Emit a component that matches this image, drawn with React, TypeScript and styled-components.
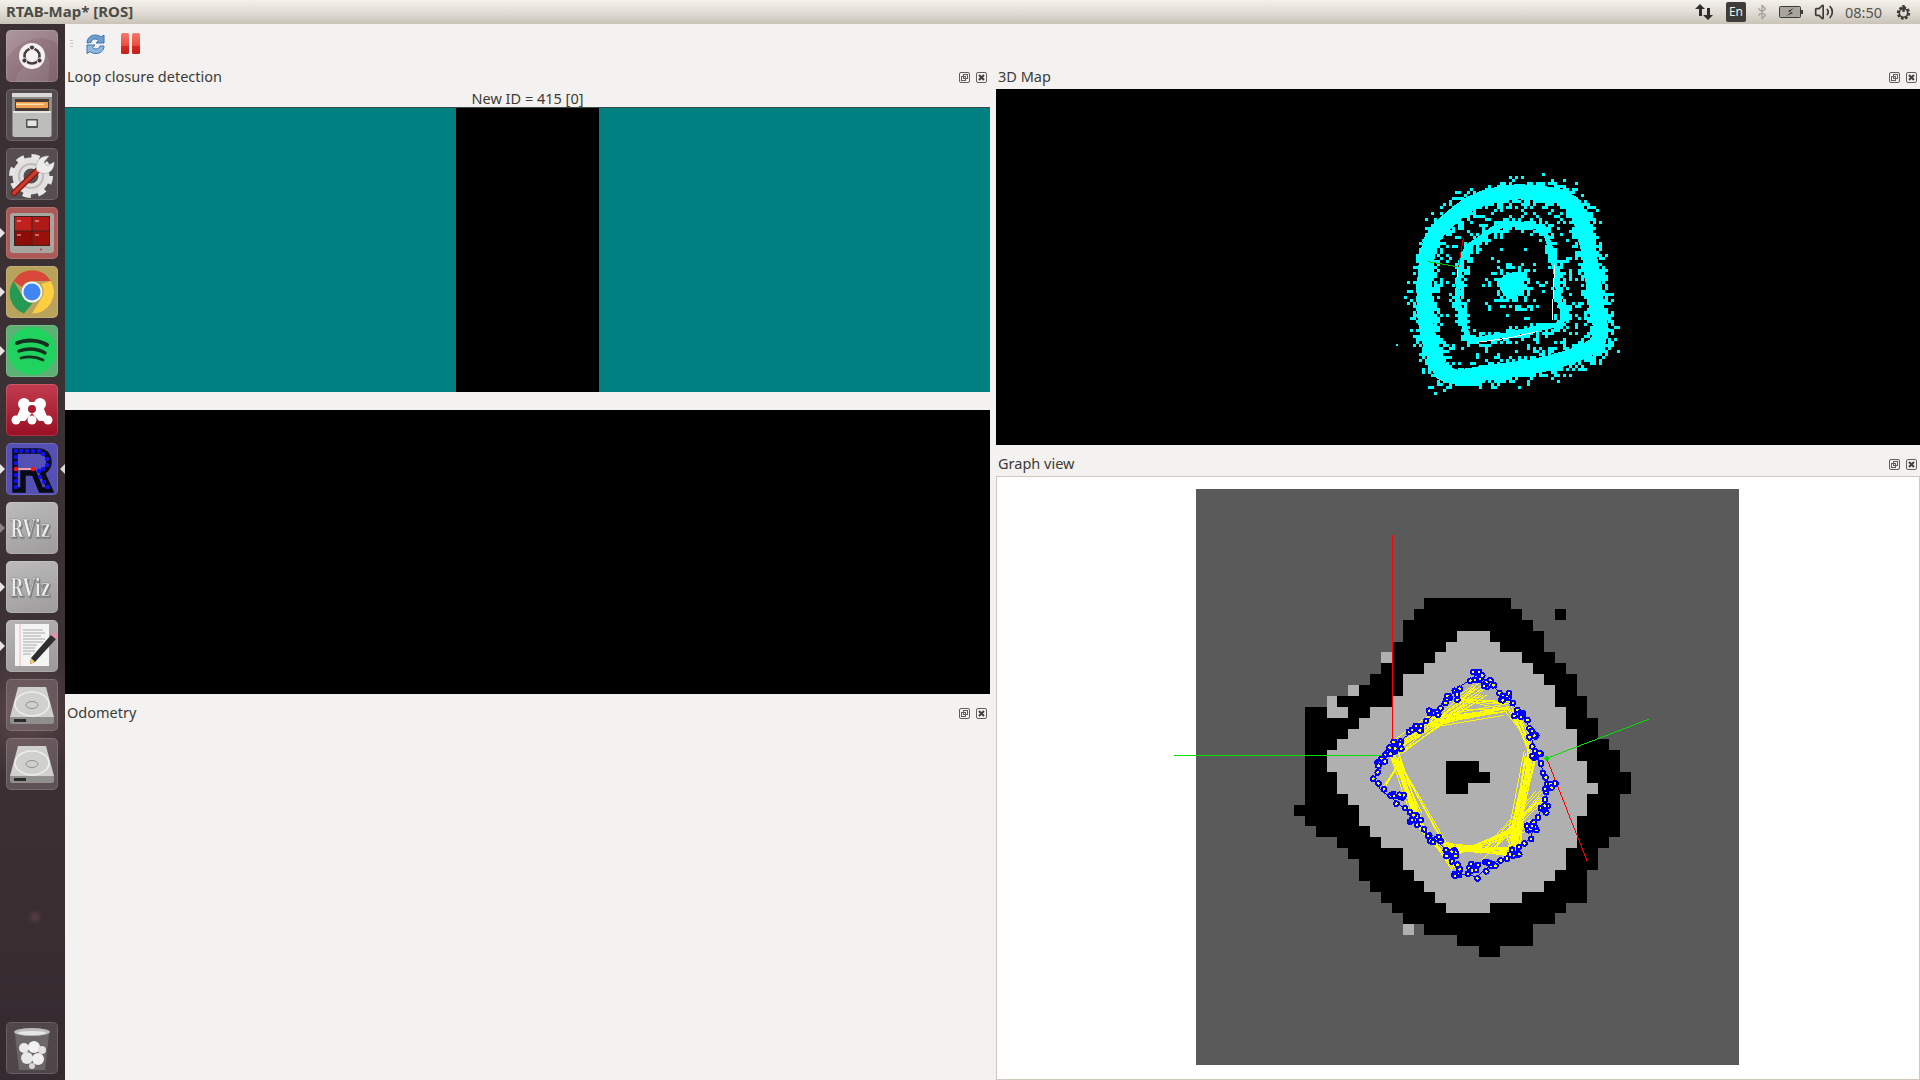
import React, { useMemo } from "react";
import styled, { createGlobalStyle } from "styled-components";
import { Bluetooth, Volume2 } from "lucide-react";

const GlobalStyle = createGlobalStyle`
  html, body {
    margin: 0;
    padding: 0;
    height: 100%;
    overflow: hidden;
    background: #f4f2f0;
  }
  #root { height: 100%; }
`;

const FONT = `"Noto Sans", "Open Sans", sans-serif`;

const Screen = styled.div`
  display: flex;
  flex-direction: column;
  width: 1920px;
  height: 1080px;
  font-family: ${FONT};
  color: #3c3b37;
  background: #f4f2f0;
`;

const TopBar = styled.div`
  display: flex;
  align-items: center;
  justify-content: space-between;
  flex: 0 0 24px;
  padding: 0 8px 0 6px;
  box-sizing: border-box;
  background: linear-gradient(180deg, #f3f1ea 0%, #e4e0d8 45%, #c9c3b8 100%);
`;

const WindowTitle = styled.div`
  font-size: 15px;
  line-height: 22px;
  padding-bottom: 2px;
  font-weight: 700;
  color: #4c4c47;
`;

const Tray = styled.div`
  display: flex;
  align-items: center;
  height: 24px;
`;

const TrayItem = styled.div<{ $ml: number; $color?: string }>`
  display: flex;
  align-items: center;
  margin-left: ${(p) => p.$ml}px;
  color: ${(p) => p.$color ?? "#3c3b37"};
`;

const LangBadge = styled.div`
  width: 20px;
  height: 20px;
  border-radius: 2px;
  background: #3d3c3a;
  color: #f2f0ea;
  font-size: 12px;
  line-height: 20px;
  text-align: center;
`;

const Clock = styled.div`
  font-size: 14.5px;
  color: #55544f;
`;

const Body = styled.div`
  display: flex;
  flex: 1;
  min-height: 0;
`;

const Launcher = styled.div`
  position: relative;
  flex: 0 0 65px;
  display: flex;
  flex-direction: column;
  background:
    radial-gradient(ellipse 60px 70px at 25px 690px, rgba(140, 105, 110, 0.4), transparent 100%),
    radial-gradient(circle 8px at 35px 893px, rgba(150, 90, 100, 0.35), transparent 100%),
    linear-gradient(180deg, #3a3034 0%, #3c3135 55%, #3b2f33 75%, #352a2f 100%);
`;

const TileSlot = styled.div<{ $mt?: number }>`
  position: relative;
  height: 52px;
  margin: ${(p) => p.$mt ?? 7}px 0 0 6px;
  width: 52px;
`;

const Tile = styled.div<{ $bg: string }>`
  width: 52px;
  height: 52px;
  border-radius: 5px;
  overflow: hidden;
  background: ${(p) => p.$bg};
  box-shadow: inset 0 0 0 1px rgba(255, 255, 255, 0.14);

  svg {
    display: block;
  }
`;

const Pip = styled.div<{ $hollow?: boolean }>`
  position: absolute;
  left: -6px;
  top: 21px;
  width: 0;
  height: 0;
  border-top: 5px solid transparent;
  border-bottom: 5px solid transparent;
  border-left: 5px solid ${(p) => (p.$hollow ? "#8c8084" : "#e8e4e4")};
`;

const PipRight = styled.div`
  position: absolute;
  right: -7px;
  top: 21px;
  width: 0;
  height: 0;
  border-top: 5px solid transparent;
  border-bottom: 5px solid transparent;
  border-right: 5px solid #dcd8d8;
`;

const TrashSlot = styled.div`
  position: relative;
  margin: auto 0 6px 6px;
  width: 52px;
  height: 52px;
`;

const Main = styled.div`
  flex: 1;
  display: flex;
  flex-direction: column;
  min-width: 0;
`;

const Toolbar = styled.div`
  flex: 0 0 42px;
  display: flex;
  align-items: flex-start;
  padding: 8px 0 0 5px;
  box-sizing: border-box;
`;

const Grip = styled.div`
  width: 3px;
  height: 9px;
  margin: 8px 10px 0 0;
  background: repeating-linear-gradient(180deg, #c9c6c2 0 1px, transparent 1px 3px);
`;

const ToolButton = styled.div<{ $mr?: number }>`
  width: 24px;
  height: 24px;
  margin-right: ${(p) => p.$mr ?? 0}px;

  svg {
    display: block;
  }
`;

const Docks = styled.div`
  flex: 1;
  display: flex;
  min-height: 0;
`;

const LeftColumn = styled.div`
  flex: 0 0 925px;
  margin-right: 6px;
  display: flex;
  flex-direction: column;
`;

const RightColumn = styled.div`
  flex: 1;
  display: flex;
  flex-direction: column;
  min-width: 0;
`;

const DockTitle = styled.div<{ $mt?: number; $mb?: number }>`
  flex: 0 0 22px;
  display: flex;
  align-items: center;
  justify-content: space-between;
  margin: ${(p) => p.$mt ?? 0}px 0 ${(p) => p.$mb ?? 0}px;
  padding: 0 3px 0 2px;
  font-size: 14.5px;
  line-height: 20px;
  color: #3c3b37;
`;

const DockLabel = styled.span`
  margin-top: -2px;
`;

const DockButtons = styled.div`
  display: flex;
  gap: 6px;
  svg {
    display: block;
  }
`;

const ViewLabel = styled.div`
  flex: 0 0 19px;
  min-height: 0;
  text-align: center;
  font-size: 14.5px;
  line-height: 21px;
  color: #3c3b37;
`;

const LoopImage = styled.div`
  flex: 0 0 285px;
  display: flex;
  justify-content: center;
  background: #008080;
  border-top: 1px solid #3a4a4a;
  box-sizing: border-box;
`;

const LoopGap = styled.div`
  width: 143px;
  background: #000;
`;

const BlackView = styled.div<{ $h: number; $mt?: number }>`
  flex: 0 0 ${(p) => p.$h}px;
  margin-top: ${(p) => p.$mt ?? 0}px;
  background: #000;
  overflow: hidden;

  svg {
    display: block;
  }
`;

const GraphCanvas = styled.div`
  flex: 1;
  background: #fff;
  border: 1px solid #cfc8bf;
  overflow: hidden;

  svg {
    display: block;
  }
`;

function rng(seed: number) {
  let a = seed;
  return () => {
    a |= 0;
    a = (a + 0x6d2b79f5) | 0;
    let t = Math.imul(a ^ (a >>> 15), 1 | a);
    t = (t + Math.imul(t ^ (t >>> 7), 61 | t)) ^ t;
    return ((t ^ (t >>> 14)) >>> 0) / 4294967296;
  };
}

type Pt = [number, number];

function resample(poly: Pt[], step: number): Pt[] {
  const out: Pt[] = [];
  for (let i = 0; i < poly.length; i++) {
    const [x0, y0] = poly[i];
    const [x1, y1] = poly[(i + 1) % poly.length];
    const n = Math.max(1, Math.round(Math.hypot(x1 - x0, y1 - y0) / step));
    for (let k = 0; k < n; k++) out.push([x0 + ((x1 - x0) * k) / n, y0 + ((y1 - y0) * k) / n]);
  }
  return out;
}

// corner cutting, so the scanned walls come out round
function smooth(poly: Pt[]): Pt[] {
  const out: Pt[] = [];
  for (let i = 0; i < poly.length; i++) {
    const [x0, y0] = poly[i];
    const [x1, y1] = poly[(i + 1) % poly.length];
    out.push([x0 * 0.75 + x1 * 0.25, y0 * 0.75 + y1 * 0.25]);
    out.push([x0 * 0.25 + x1 * 0.75, y0 * 0.25 + y1 * 0.75]);
  }
  return out;
}

const OUTER_RING: Pt[] = smooth([
  [132, 420], [140, 320], [155, 262], [215, 200], [285, 150], [390, 124], [480, 128], [570, 145],
  [605, 210], [632, 330], [645, 450], [670, 570], [600, 612], [470, 650], [340, 665], [195, 688],
  [158, 610], [132, 500],
]);

const INNER_RING: Pt[] = [
  [240, 345], [262, 290], [300, 265], [340, 235], [395, 220], [490, 232], [510, 290], [530, 380],
  [538, 450], [555, 505], [530, 525], [470, 535], [380, 555], [270, 572], [245, 510], [232, 440],
];

function cloudPaths() {
  const r = rng(7);
  const map = (x: number, y: number): Pt => [
    Math.round((1380 + x / 3 - 996) / 3) * 3,
    Math.round((150 + y / 3 - 89) / 3) * 3,
  ];
  const gauss = () => (r() + r() + r() - 1.5) / 0.5;
  let d = "";
  const dot = (x: number, y: number) => {
    const [px, py] = map(x, y);
    d += `M${px} ${py}h3v3h-3z`;
  };
  const outer = resample(OUTER_RING, 8);
  const inner = resample(INNER_RING, 6);
  const cx = 395;
  const cy = 405;
  for (let i = 0; i < 2400; i++) {
    const p = outer[Math.floor(r() * outer.length)];
    dot(p[0] + gauss() * 19, p[1] + gauss() * 17);
  }
  for (let i = 0; i < 170; i++) {
    const p = outer[Math.floor(r() * outer.length)];
    const f = 0.64 + r() * 0.26;
    dot(cx + (p[0] - cx) * f, cy + (p[1] - cy) * f);
  }
  for (let i = 0; i < 60; i++) {
    const p = outer[Math.floor(r() * outer.length)];
    const f = 1.1 + r() * 0.12;
    dot(cx + (p[0] - cx) * f, cy + (p[1] - cy) * f);
  }
  for (let i = 0; i < 620; i++) {
    const p = inner[Math.floor(r() * inner.length)];
    dot(p[0] + gauss() * 10, p[1] + gauss() * 10);
  }
  for (let i = 0; i < 150; i++) {
    const a = r() * Math.PI * 2;
    const rad = 30 + r() * r() * 100;
    dot(cx + Math.cos(a) * rad, cy + Math.sin(a) * rad);
  }
  const toPts = (ring: Pt[]) =>
    ring.map(([x, y]) => `${1380 + x / 3 - 996},${150 + y / 3 - 89}`).join(" ");
  return { d, outer: toPts(OUTER_RING), inner: toPts(INNER_RING) };
}

function PointCloud() {
  const { d, outer, inner } = useMemo(cloudPaths, []);
  const ax = (x: number, y: number) => `${1380 + x / 3 - 996},${150 + y / 3 - 89}`;
  return (
    <svg width="924" height="356" shapeRendering="crispEdges">
      <polygon points={outer} fill="none" stroke="#00ffff" strokeWidth="15" strokeLinejoin="round" />
      <polygon points={inner} fill="none" stroke="#00ffff" strokeWidth="5" strokeLinejoin="round" />
      <path d={d} fill="#00ffff" />
      <circle cx={1380 + 395 / 3 - 996} cy={150 + 405 / 3 - 89} r="12" fill="#00ffff" />
      <rect x={1380 + 48 / 3 - 996} y={150 + 582 / 3 - 89} width="2" height="2" fill="#00ffff" />
      <polyline points={`${ax(232, 350)} ${ax(145, 335)}`} stroke="#00c000" strokeWidth="1" />
      <polyline points={`${ax(236, 350)} ${ax(250, 265)}`} stroke="#d00000" strokeWidth="1" />
      <polyline points={`${ax(290, 577)} ${ax(380, 565)} ${ax(470, 545)}`} fill="none" stroke="#fff" strokeWidth="1" />
      <polyline points={`${ax(516, 510)} ${ax(524, 345)}`} fill="none" stroke="#fff" strokeWidth="1" />
      <polyline points={`${ax(232, 385)} ${ax(234, 350)}`} fill="none" stroke="#fff" strokeWidth="1" />
    </svg>
  );
}

// black range, light range(s), hole; columns of the occupancy grid
const GRID: { b: number[][]; l?: number[][]; h?: number[] }[] = [
  { b: [[12, 20]] },
  { b: [[11, 21], [24, 25]] },
  { b: [[10, 22]] },
  { b: [[10, 23]], l: [[15, 18]] },
  { b: [[9, 23]], l: [[14, 19]] },
  { b: [[9, 24]], l: [[13, 21], [8, 9]] },
  { b: [[8, 25]], l: [[12, 22]] },
  { b: [[7, 26]], l: [[10, 23]] },
  { b: [[6, 26]], l: [[10, 24], [5, 6]] },
  { b: [[4, 27]], l: [[9, 24], [3, 4]] },
  { b: [[1, 27]], l: [[7, 25], [3, 5]] },
  { b: [[1, 28]], l: [[6, 25]] },
  { b: [[1, 28]], l: [[5, 26]] },
  { b: [[1, 29]], l: [[4, 26]] },
  { b: [[1, 30]], l: [[3, 26]] },
  { b: [[1, 30]], l: [[3, 27]], h: [14, 17] },
  { b: [[1, 31]], l: [[4, 27]], h: [14, 18] },
  { b: [[1, 31]], l: [[4, 28]], h: [14, 16] },
  { b: [[1, 30]], l: [[5, 27]] },
  { b: [[0, 30]], l: [[6, 27]] },
  { b: [[1, 30]], l: [[6, 26]] },
  { b: [[2, 30]], l: [[7, 26]] },
  { b: [[4, 29]], l: [[8, 26]] },
  { b: [[5, 28]], l: [[10, 25]] },
  { b: [[6, 28]], l: [[10, 25]] },
  { b: [[6, 27]], l: [[11, 24]] },
  { b: [[7, 27]], l: [[12, 23]] },
  { b: [[8, 27]], l: [[13, 21]] },
  { b: [[9, 25]], l: [[14, 18]] },
  { b: [[10, 24]] },
  { b: [[12, 22]], l: [[10, 11]] },
  { b: [[15, 22]] },
  { b: [[17, 19]] },
];

const LOOP: Pt[] = [
  [298, 518], [282, 570], [305, 603], [355, 640], [405, 685], [430, 720], [460, 745], [510, 790],
  [535, 850], [590, 860], [640, 820], [700, 790], [750, 745], [785, 655], [812, 590], [770, 500],
  [740, 390], [680, 322], [620, 275], [590, 255], [540, 290], [490, 335], [460, 375], [410, 415],
  [365, 450], [330, 480],
];

// node clusters where the robot went by several times
const CLUSTERS: Pt[] = [
  [300, 518], [335, 480], [350, 465], [410, 415], [460, 375], [515, 320], [590, 258], [625, 280],
  [670, 320], [720, 370], [755, 435], [768, 490], [810, 590], [790, 655], [755, 720], [705, 785],
  [630, 820], [580, 830], [535, 848], [510, 790], [460, 745], [405, 685], [355, 610],
];

function graphData() {
  const r = rng(21);
  const lines: string[] = [];
  const fan = (a: Pt, b: Pt, n: number, spread: number) => {
    const j = () => (r() - 0.5) * spread;
    for (let i = 0; i < n; i++) lines.push(`M${a[0] + j()} ${a[1] + j()}L${b[0] + j()} ${b[1] + j()}`);
  };
  // the closures run along the sides of the loop and leave the middle empty
  fan([370, 470], [600, 300], 16, 50);
  fan([450, 400], [670, 360], 14, 36);
  fan([540, 345], [690, 345], 6, 40);
  fan([690, 350], [750, 470], 10, 36);
  fan([752, 490], [700, 770], 24, 40);
  fan([790, 620], [620, 790], 10, 44);
  fan([500, 770], [700, 785], 16, 28);
  fan([520, 790], [760, 700], 8, 30);
  fan([345, 500], [410, 680], 20, 36);
  fan([365, 530], [500, 770], 4, 10);
  fan([400, 680], [530, 840], 8, 30);
  fan([310, 590], [360, 520], 3, 16);

  const loop = resample(LOOP, 26);
  const nodes = loop.map(([x, y]) => [x + (r() - 0.5) * 14, y + (r() - 0.5) * 14] as Pt);
  CLUSTERS.forEach(([x, y]) => {
    for (let i = 0; i < 6; i++) nodes.push([x + (r() - 0.5) * 34, y + (r() - 0.5) * 26]);
  });
  return { chords: lines.join(""), nodes };
}

function GraphView() {
  const { chords, nodes } = useMemo(graphData, []);
  const cx = (c: number) => 42 + c * 32.6;
  const cy = (row: number) => 24 + row * 32.64;
  return (
    <svg width="922" height="602" shapeRendering="crispEdges">
      <rect x="199" y="12" width="543" height="576" fill="#5a5a5a" />
      <g transform="translate(283 113) scale(0.3333)">
        {GRID.map((row, i) => (
          <React.Fragment key={i}>
            {row.b.map(([a, b]) => (
              <rect key={a} x={cx(a)} y={cy(i)} width={cx(b) - cx(a)} height="32.64" fill="#000" />
            ))}
            {row.l?.map(([a, b]) => (
              <rect key={a} x={cx(a)} y={cy(i)} width={cx(b) - cx(a)} height="32.64" fill="#b0b0b0" />
            ))}
            {row.h && (
              <rect x={cx(row.h[0])} y={cy(i)} width={cx(row.h[1]) - cx(row.h[0])} height="32.64" fill="#000" />
            )}
          </React.Fragment>
        ))}
        <line x1="338" y1="-165" x2="338" y2="470" stroke="#ff0000" strokeWidth="3" />
        <line x1="-318" y1="496" x2="310" y2="496" stroke="#00e000" strokeWidth="3" />
        <line x1="800" y1="505" x2="1106" y2="388" stroke="#00e000" strokeWidth="3" />
        <line x1="800" y1="505" x2="921" y2="812" stroke="#ff0000" strokeWidth="3" />
        <path d={chords} fill="none" stroke="#ffff00" strokeWidth="3" />
        <polygon
          points={LOOP.map((p) => p.join(",")).join(" ")}
          fill="none"
          stroke="#0000ff"
          strokeWidth="3"
        />
        {nodes.map(([x, y], i) => (
          <circle key={i} cx={x} cy={y} r="7" fill="#ffff00" stroke="#0000ff" strokeWidth="6" />
        ))}
        <circle cx="800" cy="505" r="7" fill="#00e000" />
      </g>
    </svg>
  );
}

function FloatIcon() {
  return (
    <svg width="11" height="11" viewBox="0 0 11 11" fill="none" stroke="#5f5f5c">
      <rect x="0.5" y="0.5" width="10" height="10" rx="1.5" />
      <rect x="4.5" y="2.5" width="4" height="4" />
      <rect x="2.5" y="4.5" width="4" height="4" />
    </svg>
  );
}

function CloseIcon() {
  return (
    <svg width="11" height="11" viewBox="0 0 11 11" fill="none" stroke="#5f5f5c">
      <rect x="0.5" y="0.5" width="10" height="10" rx="1.5" />
      <path d="M3 3l5 5M8 3l-5 5" strokeWidth="2" stroke="#3f3f3d" />
    </svg>
  );
}

function DockControls() {
  return (
    <DockButtons>
      <FloatIcon />
      <CloseIcon />
    </DockButtons>
  );
}

function RefreshIcon() {
  return (
    <svg width="24" height="24" viewBox="0 0 24 24">
      <path
        d="M4 11c0-5 4-8 8-8 3 0 5 1 6 2l3-2v8h-8l2.5-2.5c-1-1-2-1.5-3.5-1.5-2 0-3.5 1-4 3.5z"
        fill="#6f9fd0"
        stroke="#3f74ad"
      />
      <path
        d="M21 14c0 5-4 7.5-8 7.5-3 0-5-1-6-2L4 21.5V13h8l-2.5 2.5c1 1 2 1.5 3.5 1.5 2 0 3.5-1 4-3z"
        fill="#8fb8de"
        stroke="#3f74ad"
      />
    </svg>
  );
}

function PauseIcon() {
  return (
    <svg width="24" height="24" viewBox="0 0 24 24">
      <defs>
        <linearGradient id="pz" x1="0" y1="0" x2="0" y2="1">
          <stop offset="0" stopColor="#f47a6e" />
          <stop offset="0.6" stopColor="#ee4a3c" />
          <stop offset="0.62" stopColor="#d8281e" />
          <stop offset="1" stopColor="#c42018" />
        </linearGradient>
      </defs>
      <rect x="2" y="1" width="8" height="21" rx="1.5" fill="url(#pz)" />
      <rect x="13" y="1" width="8" height="21" rx="1.5" fill="url(#pz)" />
    </svg>
  );
}

function ArrowsIcon() {
  return (
    <svg width="18" height="18" viewBox="0 0 18 18" fill="#2f2e2c">
      <path d="M5 1l5 5H7v7H4V6H0z" />
      <path d="M13 17l5-5h-3V5h-3v7H8z" />
    </svg>
  );
}

function BatteryIcon() {
  return (
    <svg width="24" height="14" viewBox="0 0 24 14">
      <rect x="0.5" y="1.5" width="21" height="11" rx="1" fill="#a8a59e" stroke="#3c3b37" />
      <rect x="22" y="5" width="2" height="4" fill="#3c3b37" />
      <path d="M15 3L9 6l3 1.5L7 11l7-3-3-1.5z" fill="#2f2e2c" />
    </svg>
  );
}

function SessionIcon() {
  return (
    <svg width="17" height="17" viewBox="0 0 17 17" fill="none" stroke="#3a3936">
      <circle cx="8.5" cy="9" r="5.5" strokeWidth="2.4" strokeDasharray="2.6 1.6" />
      <circle cx="8.5" cy="9" r="4.2" strokeWidth="1.6" />
      <line x1="8.5" y1="1" x2="8.5" y2="8" strokeWidth="2.4" />
    </svg>
  );
}

function DashIcon() {
  return (
    <svg width="52" height="52" viewBox="0 0 52 52">
      <path d="M0 30C14 6 40 4 52 14V0H0z" fill="rgba(255,255,255,.1)" />
      <path d="M10 52C10 34 30 36 40 24c6 8 2 22 2 28z" fill="rgba(255,255,255,.08)" />
      <circle cx="26" cy="26" r="13" fill="#f5f1f1" />
      <circle cx="26" cy="26" r="7.5" fill="none" stroke="#4a3b40" strokeWidth="2.6" />
      <circle cx="26" cy="17.5" r="2.6" fill="#4a3b40" stroke="#f5f1f1" />
      <circle cx="18.5" cy="30.5" r="2.6" fill="#4a3b40" stroke="#f5f1f1" />
      <circle cx="33.5" cy="30.5" r="2.6" fill="#4a3b40" stroke="#f5f1f1" />
    </svg>
  );
}

function FilesIcon() {
  return (
    <svg width="52" height="52" viewBox="0 0 52 52">
      <rect x="6" y="4" width="40" height="44" rx="2" fill="#8f8e8b" />
      <path d="M6 4h40v4H6z" fill="#d8d8d6" />
      <rect x="9" y="10" width="34" height="14" fill="#4a3a32" />
      <rect x="10" y="13" width="32" height="6" fill="#f0a050" />
      <rect x="10" y="14.5" width="28" height="1.5" fill="#fbe0b0" />
      <path d="M7 22h38v24a2 2 0 0 1-2 2H9a2 2 0 0 1-2-2z" fill="#bdbdb9" />
      <path d="M7 22h38v2H7z" fill="#e4e4e0" />
      <rect x="20" y="30" width="12" height="9" rx="1" fill="#55534f" />
      <rect x="21.5" y="31.5" width="9" height="5.5" fill="#e6e6e2" />
    </svg>
  );
}

function SettingsIcon() {
  return (
    <svg width="52" height="52" viewBox="0 0 52 52">
      <circle cx="25" cy="28" r="13" fill="none" stroke="#e2e0de" strokeWidth="11" />
      <circle cx="25" cy="28" r="12" fill="none" stroke="#bcbab8" strokeWidth="2" />
      <circle
        cx="25"
        cy="28"
        r="19.5"
        fill="none"
        stroke="#e8e6e4"
        strokeWidth="5"
        strokeDasharray="8 7.3"
      />
      <path d="M8 45L35 19" stroke="#7c1a14" strokeWidth="6" strokeLinecap="round" />
      <path d="M8 45L35 19" stroke="#cc3a2c" strokeWidth="3.6" strokeLinecap="round" />
      <path d="M31 23c-3-7 2-16 12-15l-5 6 3 4 7-4c1 9-8 15-17 9z" fill="#ececea" stroke="#a8a8a6" strokeWidth="0.6" />
    </svg>
  );
}

function TerminalIcon() {
  return (
    <svg width="52" height="52" viewBox="0 0 52 52">
      <rect x="4" y="6" width="44" height="40" rx="3" fill="#a7a5a0" />
      <rect x="8" y="9" width="36" height="30" fill="#3c2420" />
      <rect x="9" y="10" width="16.5" height="13.5" fill="#c2201c" />
      <rect x="26.5" y="10" width="16.5" height="13.5" fill="#b01a16" />
      <rect x="9" y="24.5" width="16.5" height="13.5" fill="#8c0c0a" />
      <rect x="26.5" y="24.5" width="16.5" height="13.5" fill="#9a100c" />
      <path d="M11 14h4M11 28h4M29 14h4M29 28h4" stroke="#f0c8c0" strokeWidth="1.2" />
      <circle cx="35" cy="42.5" r="1" fill="#d02a20" />
    </svg>
  );
}

function ChromeIcon() {
  return (
    <svg width="52" height="52" viewBox="0 0 52 52">
      <path d="M7.5 15A21.5 21.5 0 0 1 44.8 15H26a11 11 0 0 0-10 6z" fill="#d9483b" />
      <path d="M7.5 15l10.2 17a11 11 0 0 0 9 5L18 47.5A21.5 21.5 0 0 1 7.5 15z" fill="#259a52" />
      <path d="M44.8 15A21.5 21.5 0 0 1 26 47.5L35.5 32A11 11 0 0 0 35 18z" fill="#fdce40" />
      <circle cx="26" cy="26" r="10.5" fill="#f4f4f4" />
      <circle cx="26" cy="26" r="8.5" fill="#4286f5" />
    </svg>
  );
}

function SpotifyIcon() {
  return (
    <svg width="52" height="52" viewBox="0 0 52 52">
      <circle cx="26" cy="26" r="24" fill="#1fd35e" />
      <g fill="none" stroke="#14301f" strokeLinecap="round">
        <path d="M11 18c10-4 22-3 30 2" strokeWidth="4" />
        <path d="M13 26c9-3 19-2 26 2" strokeWidth="3.4" />
        <path d="M15 33c8-2 16-1 22 2" strokeWidth="2.8" />
      </g>
    </svg>
  );
}

function MendeleyIcon() {
  return (
    <svg width="52" height="52" viewBox="0 0 52 52" fill="#fff">
      <path d="M9 37L17 18h18l8 19H33l-7-8-7 8z" />
      <circle cx="18" cy="20" r="6" />
      <circle cx="34" cy="20" r="6" />
      <circle cx="10" cy="36" r="4.5" />
      <circle cx="26" cy="36" r="4.5" />
      <circle cx="42" cy="36" r="4.5" />
      <circle cx="26" cy="25" r="4" fill="#a91b2e" />
    </svg>
  );
}

function RIcon() {
  const dots: Pt[] = [
    [10, 8], [15, 8], [21, 8], [27, 8], [33, 8], [10, 14], [10, 20], [10, 26], [10, 32], [10, 38],
    [10, 44], [37, 11], [41, 16], [41, 22], [37, 26], [33, 28], [34, 34], [38, 39], [42, 44],
  ];
  return (
    <svg width="52" height="52" viewBox="0 0 52 52">
      <path
        d="M9 47V8h23c9 0 11 6 11 11 0 5-3 9-7 10l8 18h-9l-7-17H17v17z"
        fill="none"
        stroke="#0a0a14"
        strokeWidth="5.5"
      />
      <path d="M10 26h17" stroke="#e8a0a0" strokeWidth="2" />
      {dots.map(([x, y]) => (
        <circle key={`${x}-${y}`} cx={x} cy={y} r="2.2" fill="#1010ff" />
      ))}
      <circle cx="10" cy="26" r="2.2" fill="#ff1010" />
      <circle cx="27" cy="26" r="2.2" fill="#ff1010" />
    </svg>
  );
}

const RvizText = styled.text`
  font-family: "DejaVu Serif", "Liberation Serif", serif;
  font-weight: 700;
  fill: #ececec;
  stroke: #777;
  stroke-width: 0.4px;
  filter: drop-shadow(1px 1px 0 #7c7c7c);
`;

function RvizIcon() {
  return (
    <svg width="52" height="52" viewBox="0 0 52 52">
      <g transform="translate(4 35) scale(1 1.5)">
        <RvizText x="0" y="0" fontSize="16">RViz</RvizText>
      </g>
    </svg>
  );
}

function EditorIcon() {
  return (
    <svg width="52" height="52" viewBox="0 0 52 52">
      <rect x="9" y="4" width="34" height="42" fill="#f4f4f4" />
      <line x1="14" y1="4" x2="14" y2="46" stroke="#eeb8b8" />
      <path
        d="M17 10h20M17 13h22M17 16h18M17 19h22M17 22h20M17 25h14M17 28h12M17 31h12M17 34h8"
        stroke="#a8a8a8"
      />
      <path d="M25 38L45 15l5 4-21 23-5 2z" fill="#2e2e2e" />
      <path d="M25 38l4 4-5 2z" fill="#f4d070" />
      <path d="M45 15l3-3 5 4-3 3z" fill="#e88cb0" />
    </svg>
  );
}

function DiskIcon() {
  return (
    <svg width="52" height="52" viewBox="0 0 52 52">
      <path d="M12 8h28l8 30H4z" fill="#d0d0ce" />
      <ellipse cx="26" cy="25" rx="17" ry="12" fill="none" stroke="#eeeeec" strokeWidth="1.5" />
      <ellipse cx="26" cy="26" rx="6" ry="3.5" fill="none" stroke="#8e8e8c" />
      <path d="M4 38h44v5a2 2 0 0 1-2 2H6a2 2 0 0 1-2-2z" fill="#8f8f8d" />
      <rect x="8" y="40" width="12" height="3" fill="#2a2a2a" />
    </svg>
  );
}

function TrashIcon() {
  return (
    <svg width="52" height="52" viewBox="0 0 52 52">
      <path d="M9 12l4 36h26l4-36z" fill="rgba(180,180,180,.3)" />
      <ellipse cx="26" cy="10" rx="18" ry="4" fill="#bdbcba" />
      <ellipse cx="26" cy="11" rx="14" ry="2" fill="#e6e6e4" />
      <circle cx="18" cy="26" r="5" fill="#eaeaea" />
      <circle cx="28" cy="25" r="6" fill="#f2f2f2" />
      <circle cx="36" cy="28" r="4" fill="#e0e0e0" />
      <circle cx="21" cy="36" r="6" fill="#e8e8e8" />
      <circle cx="32" cy="37" r="6" fill="#f0f0f0" />
      <circle cx="26" cy="44" r="3" fill="#d8d8d8" />
    </svg>
  );
}

type LaunchItem = {
  key: string;
  bg: string;
  icon: React.ReactNode;
  pip?: "solid" | "hollow";
  pipRight?: boolean;
};

const GREY_TILE = "linear-gradient(160deg, #bdbcbc, #9d9b9b)";
const DARK_TILE = "rgba(120, 110, 114, 0.45)";

const ITEMS: LaunchItem[] = [
  { key: "dash", bg: "linear-gradient(135deg, #a58a92, #7d626b)", icon: <DashIcon /> },
  { key: "files", bg: DARK_TILE, icon: <FilesIcon /> },
  { key: "settings", bg: "rgba(105, 98, 100, 0.6)", icon: <SettingsIcon /> },
  { key: "term", bg: "#ac5a58", icon: <TerminalIcon />, pip: "solid" },
  { key: "chrome", bg: "#b8a25c", icon: <ChromeIcon />, pip: "solid" },
  { key: "spotify", bg: "#5cb074", icon: <SpotifyIcon />, pip: "solid" },
  { key: "mendeley", bg: "linear-gradient(180deg, #c23c50, #9a0f24)", icon: <MendeleyIcon /> },
  { key: "r", bg: "#5550b4", icon: <RIcon />, pip: "solid", pipRight: true },
  { key: "rviz1", bg: GREY_TILE, icon: <RvizIcon />, pip: "hollow" },
  { key: "rviz2", bg: GREY_TILE, icon: <RvizIcon />, pip: "solid" },
  { key: "edit", bg: "linear-gradient(160deg, #b6b4b4, #9a9898)", icon: <EditorIcon />, pip: "solid" },
  { key: "disk1", bg: "rgba(150, 135, 138, 0.4)", icon: <DiskIcon /> },
  { key: "disk2", bg: "rgba(150, 135, 138, 0.4)", icon: <DiskIcon /> },
];

export default function App() {
  return (
    <Screen>
      <GlobalStyle />
      <TopBar>
        <WindowTitle>RTAB-Map* [ROS]</WindowTitle>
        <Tray>
          <TrayItem $ml={0}><ArrowsIcon /></TrayItem>
          <TrayItem $ml={13}><LangBadge>En</LangBadge></TrayItem>
          <TrayItem $ml={8} $color="#a5a29b"><Bluetooth size={16} /></TrayItem>
          <TrayItem $ml={9}><BatteryIcon /></TrayItem>
          <TrayItem $ml={11}><Volume2 size={20} /></TrayItem>
          <TrayItem $ml={11}><Clock>08:50</Clock></TrayItem>
          <TrayItem $ml={13}><SessionIcon /></TrayItem>
        </Tray>
      </TopBar>
      <Body>
        <Launcher>
          {ITEMS.map((item, i) => (
            <TileSlot key={item.key} $mt={i === 0 ? 6 : 7}>
              {item.pip && <Pip $hollow={item.pip === "hollow"} />}
              <Tile $bg={item.bg}>{item.icon}</Tile>
              {item.pipRight && <PipRight />}
            </TileSlot>
          ))}
          <TrashSlot>
            <Tile $bg="rgba(130, 122, 124, 0.35)"><TrashIcon /></Tile>
          </TrashSlot>
        </Launcher>
        <Main>
          <Toolbar>
            <Grip />
            <ToolButton $mr={12}><RefreshIcon /></ToolButton>
            <ToolButton><PauseIcon /></ToolButton>
          </Toolbar>
          <Docks>
            <LeftColumn>
              <DockTitle>
                <DockLabel>Loop closure detection</DockLabel>
                <DockControls />
              </DockTitle>
              <ViewLabel>New ID = 415 [0]</ViewLabel>
              <LoopImage><LoopGap /></LoopImage>
              <BlackView $h={284} $mt={18} />
              <DockTitle $mt={8}>
                <DockLabel>Odometry</DockLabel>
                <DockControls />
              </DockTitle>
            </LeftColumn>
            <RightColumn>
              <DockTitle $mb={1}>
                <DockLabel>3D Map</DockLabel>
                <DockControls />
              </DockTitle>
              <BlackView $h={356}><PointCloud /></BlackView>
              <DockTitle $mt={8} $mb={1}>
                <DockLabel>Graph view</DockLabel>
                <DockControls />
              </DockTitle>
              <GraphCanvas><GraphView /></GraphCanvas>
            </RightColumn>
          </Docks>
        </Main>
      </Body>
    </Screen>
  );
}
